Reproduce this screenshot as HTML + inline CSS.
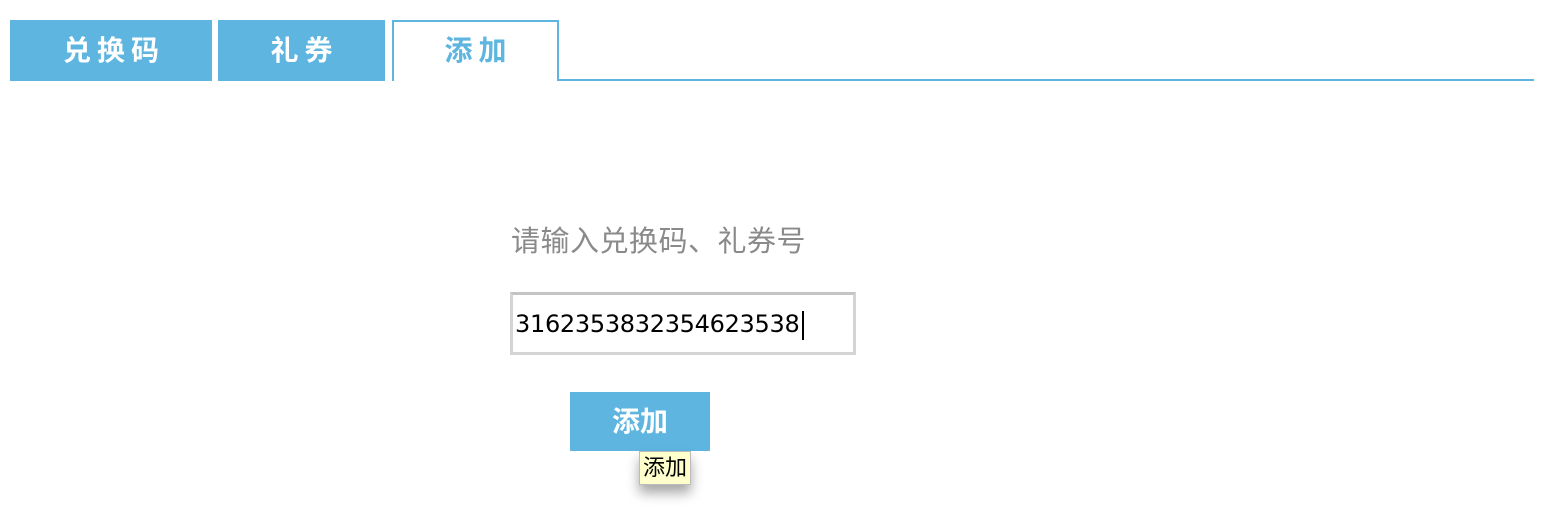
<!DOCTYPE html>
<html><head><meta charset="utf-8"><style>
body{margin:0;width:1556px;height:506px;background:#fff;position:relative;overflow:hidden;font-family:"Liberation Sans","Noto Sans CJK SC",sans-serif}
.t{position:absolute;top:20px;height:61px;background:#5db5e0;color:#fff;font-size:28px;font-weight:bold;letter-spacing:6px;text-align:center;line-height:61px;box-sizing:border-box;text-indent:6px}
</style></head><body>
<div class="t" style="left:10px;width:202px">兑换码</div>
<div class="t" style="left:218px;width:167px">礼券</div>
<div class="t" style="left:392px;width:167px;background:#fff;color:#5db5e0;border:2px solid #5db5e0;border-bottom:none;height:61px;line-height:58px">添加</div>
<div style="position:absolute;left:557px;top:79px;width:977px;height:2px;background:#5db5e0"></div>
<div style="position:absolute;left:511px;top:218px;font-size:29px;color:#8a8a8a;letter-spacing:0.5px">请输入兑换码、礼券号</div>
<div style="position:absolute;left:510px;top:292px;width:346px;height:63px;box-sizing:border-box;border:3px solid #d4d4d4;border-top-color:#c4c4c4"></div>
<div style="position:absolute;left:515px;top:310px;font-size:24px;color:#000;font-family:'DejaVu Sans',sans-serif;letter-spacing:-0.3px">3162353832354623538</div>
<div style="position:absolute;left:802px;top:311px;width:2px;height:29px;background:#000"></div>
<div style="position:absolute;left:570px;top:392px;width:140px;height:59px;background:#5db5e0;color:#fff;font-size:28px;font-weight:bold;text-align:center;line-height:59px">添加</div>
<div style="position:absolute;left:639px;top:451px;width:52px;height:34px;box-sizing:border-box;background:#ffffcc;border:1px solid #bbb;font-size:22px;line-height:32px;text-align:center;box-shadow:0 8px 12px rgba(0,0,0,0.35)">添加</div>
</body></html>
